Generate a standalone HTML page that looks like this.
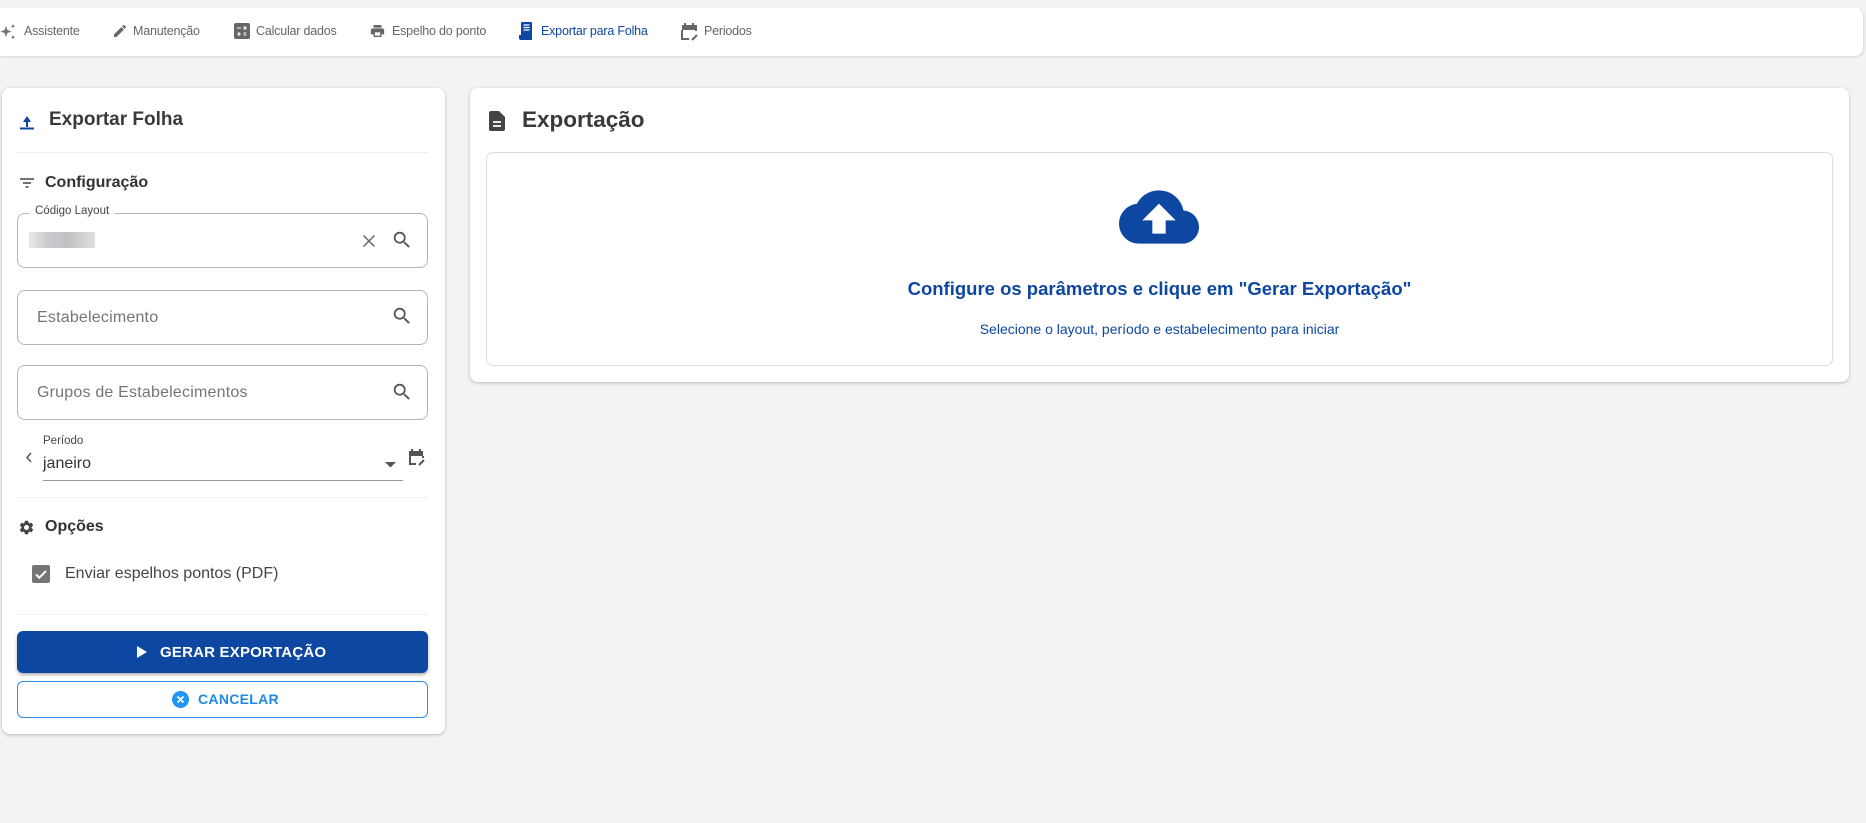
<!DOCTYPE html>
<html><head><meta charset="utf-8"><style>
*{box-sizing:border-box;margin:0;padding:0}
body{width:1866px;height:823px;background:#f3f3f3;font-family:"Liberation Sans",sans-serif;position:relative;overflow:hidden;color:#333}
.a{position:absolute}
.bar{left:0;top:8px;width:1863px;height:48px;background:#fff;border-radius:0 8px 8px 0;box-shadow:1px 1px 2px rgba(0,0,0,.12)}
.ti{position:absolute;top:24px;font-size:12.5px;color:#666;letter-spacing:-.2px;white-space:nowrap}
.card{background:#fff;border-radius:8px;box-shadow:0 1px 3px rgba(0,0,0,.25)}
.field{left:17px;width:411px;height:55px;border:1px solid #b5b5b5;border-radius:8px;background:#fff}
.ph{position:absolute;left:19px;top:18px;font-size:16px;color:#757575;letter-spacing:.2px}
.hr{height:1px;background:#eee;left:17px;width:411px}
svg{position:absolute}
</style></head><body>
<div class="a bar"></div>
<svg style="left:0;top:23px" width="16" height="18" viewBox="0 0 16 18"><path d="M6 3l1.5 4 4 1.5-4 1.5L6 14l-1.5-4L.5 8.5l4-1.5z" fill="#777"/><path d="M13 1l.7 1.5 1.5.7-1.5.7L13 5.4l-.7-1.5-1.5-.7 1.5-.7zM13 12l.7 1.5 1.5.7-1.5.7-.7 1.5-.7-1.5-1.5-.7 1.5-.7z" fill="#777"/></svg>
<div class="ti" style="left:24px">Assistente</div>
<svg style="left:112px;top:23px" width="16" height="16" viewBox="0 0 24 24"><path d="M3 17.25V21h3.75L17.8 9.94l-3.75-3.75L3 17.25zM20.7 7.04a1 1 0 000-1.41l-2.34-2.34a1 1 0 00-1.41 0l-1.83 1.83 3.75 3.75 1.83-1.83z" fill="#666"/></svg>
<div class="ti" style="left:133px">Manutenção</div>
<svg style="left:234px;top:23px" width="16" height="16" viewBox="0 0 16 16"><rect width="16" height="16" rx="2" fill="#666"/><path d="M3 5h4M9.5 3.5l3 3M12.5 3.5l-3 3M3 11h4M5 9v4M9.5 10h3M9.5 12h3" stroke="#fff" stroke-width="1.1"/></svg>
<div class="ti" style="left:256px">Calcular dados</div>
<svg style="left:369px;top:23px" width="17" height="16" viewBox="0 0 24 24"><path d="M19 8H5c-1.66 0-3 1.34-3 3v6h4v4h12v-4h4v-6c0-1.66-1.34-3-3-3zm-3 11H8v-5h8v5zm2-16H6v4h12V3z" fill="#666"/></svg>
<div class="ti" style="left:392px">Espelho do ponto</div>
<svg style="left:519px;top:22px" width="14" height="19" viewBox="0 0 14 19"><rect x="2" y="0" width="11" height="15" rx="1" fill="#0d47a1"/><path d="M4.5 3h6M4.5 5.5h6M4.5 8h6" stroke="#fff" stroke-width="1.2"/><path d="M0 13v3a2 2 0 002 2h11v-3H3v-2z" fill="#0d47a1"/></svg>
<div class="ti" style="left:541px;color:#0d47a1">Exportar para Folha</div>
<svg style="left:681px;top:22px" width="17" height="19" viewBox="0 0 17 19"><path d="M1 4h14v5" fill="none" stroke="#666" stroke-width="2"/><rect x="1" y="3" width="14" height="5" fill="#666"/><path d="M4 1v3M12 1v3" stroke="#666" stroke-width="2"/><path d="M1 8v9h7" fill="none" stroke="#666" stroke-width="2"/><path d="M11 18l5-5" stroke="#666" stroke-width="2"/></svg>
<div class="ti" style="left:704px">Periodos</div>

<div class="a card" style="left:2px;top:88px;width:443px;height:646px"></div>
<svg style="left:19px;top:112px" width="16" height="18" viewBox="0 0 16 18"><path d="M4 10h3v5h2v-5h3L8 4z" fill="#0d47a1"/><rect x="1" y="15.5" width="14" height="2" fill="#0d47a1"/></svg>
<div class="a" style="left:49px;top:109px;font-size:19px;font-weight:bold;color:#3a3a3a">Exportar Folha</div>
<div class="a hr" style="top:152px"></div>
<svg style="left:19px;top:176px" width="16" height="14" viewBox="0 0 16 14"><path d="M1 3h14M4 7h8M6.5 11h3" stroke="#444" stroke-width="1.6"/></svg>
<div class="a" style="left:45px;top:174px;font-size:16px;font-weight:bold;color:#333">Configuração</div>

<div class="a field" style="top:213px"></div>
<div class="a" style="left:29px;top:205px;background:#fff;padding:0 6px;font-size:11.5px;color:#444">Código Layout</div>
<div class="a" style="left:29px;top:232px;width:66px;height:16px;background:linear-gradient(90deg,#e6e6e6,#c4c4c8 30%,#bcb8bc 60%,#dcdcdc);opacity:.9"></div>
<svg style="left:362px;top:234px" width="14" height="14" viewBox="0 0 14 14"><path d="M1.5 1.5l11 11M12.5 1.5l-11 11" stroke="#666" stroke-width="1.5"/></svg>
<svg style="left:391px;top:229px" width="22" height="22" viewBox="0 0 24 24"><path d="M15.5 14h-.79l-.28-.27A6.47 6.47 0 0016 9.5 6.5 6.5 0 109.5 16c1.61 0 3.09-.59 4.23-1.57l.27.28v.79l5 4.99L20.49 19l-4.99-5zm-6 0C7.01 14 5 11.990 5 9.5S7.01 5 9.5 5 14 7.01 14 9.5 11.99 14 9.5 14z" fill="#555"/></svg>

<div class="a field" style="top:290px"><div class="ph">Estabelecimento</div></div>
<svg style="left:391px;top:305px" width="22" height="22" viewBox="0 0 24 24"><path d="M15.5 14h-.79l-.28-.27A6.47 6.47 0 0016 9.5 6.5 6.5 0 109.5 16c1.61 0 3.09-.59 4.23-1.57l.27.28v.79l5 4.99L20.49 19l-4.99-5zm-6 0C7.01 14 5 11.99 5 9.5S7.01 5 9.5 5 14 7.01 14 9.5 11.99 14 9.5 14z" fill="#555"/></svg>
<div class="a field" style="top:365px"><div class="ph">Grupos de Estabelecimentos</div></div>
<svg style="left:391px;top:381px" width="22" height="22" viewBox="0 0 24 24"><path d="M15.5 14h-.79l-.28-.27A6.47 6.47 0 0016 9.5 6.5 6.5 0 109.5 16c1.61 0 3.09-.59 4.23-1.57l.27.28v.79l5 4.99L20.49 19l-4.99-5zm-6 0C7.01 14 5 11.99 5 9.5S7.01 5 9.5 5 14 7.01 14 9.5 11.99 14 9.5 14z" fill="#555"/></svg>

<div class="a" style="left:43px;top:435px;font-size:11.5px;color:#444">Período</div>
<svg style="left:25px;top:452px" width="8" height="11" viewBox="0 0 8 11"><path d="M6 1L2 5.5 6 10" fill="none" stroke="#555" stroke-width="1.5"/></svg>
<div class="a" style="left:43px;top:455px;font-size:16px;color:#333">janeiro</div>
<div class="a" style="left:43px;top:480px;width:360px;height:1px;background:#999"></div>
<svg style="left:385px;top:462px" width="11" height="6" viewBox="0 0 11 6"><path d="M0 0h11L5.5 5.5z" fill="#555"/></svg>
<svg style="left:408px;top:448px" width="17" height="18" viewBox="0 0 17 18"><rect x="1" y="3" width="14" height="5" fill="#555"/><path d="M4 1v3M12 1v3" stroke="#555" stroke-width="2"/><path d="M2 8v8h6M15 8v2" fill="none" stroke="#555" stroke-width="2"/><path d="M11 17l5-5" stroke="#555" stroke-width="2"/></svg>
<div class="a hr" style="top:497px"></div>
<svg style="left:18px;top:519px" width="17" height="17" viewBox="0 0 24 24"><path d="M19.14 12.94c.04-.3.06-.61.06-.94 0-.32-.02-.64-.07-.94l2.030-1.58a.49.49 0 00.12-.61l-1.92-3.32a.49.49 0 00-.59-.22l-2.39.96c-.5-.38-1.03-.7-1.62-.94l-.36-2.54a.48.48 0 00-.48-.41h-3.84c-.24 0-.43.17-.47.41l-.36 2.54c-.59.24-1.13.57-1.62.94l-2.39-.96a.48.48 0 00-.59.22L2.74 8.87c-.12.21-.08.47.12.61l2.03 1.58c-.05.3-.09.63-.09.94s.02.64.07.94l-2.03 1.58a.49.49 0 00-.12.61l1.92 3.32c.12.22.37.29.59.22l2.39-.96c.5.38 1.03.7 1.62.94l.36 2.54c.05.24.24.41.48.41h3.84c.24 0 .44-.17.47-.41l.36-2.54c.59-.24 1.13-.56 1.62-.94l2.39.96c.22.08.47 0 .59-.22l1.92-3.32c.12-.22.07-.47-.12-.61l-2.01-1.58zM12 15.6A3.6 3.6 0 1112 8.4a3.6 3.6 0 010 7.2z" fill="#444"/></svg>
<div class="a" style="left:45px;top:518px;font-size:16px;font-weight:bold;color:#333">Opções</div>
<svg style="left:32px;top:565px" width="18" height="18" viewBox="0 0 18 18"><rect width="18" height="18" rx="2" fill="#757575"/><path d="M4 9.5l3.3 3.2L14 6" fill="none" stroke="#fff" stroke-width="2"/></svg>
<div class="a" style="left:65px;top:565px;font-size:16px;color:#444">Enviar espelhos pontos (PDF)</div>
<div class="a hr" style="top:614px"></div>
<div class="a" style="left:17px;top:631px;width:411px;height:42px;background:#0d47a1;border-radius:6px;box-shadow:0 2px 3px rgba(0,0,0,.3)"></div>
<svg style="left:137px;top:646px" width="10" height="12" viewBox="0 0 10 12"><path d="M0 0l10 6-10 6z" fill="#fff"/></svg>
<div class="a" style="left:160px;top:644px;font-size:15px;font-weight:bold;color:#fff;letter-spacing:.2px">GERAR EXPORTAÇÃO</div>
<div class="a" style="left:17px;top:681px;width:411px;height:37px;border:1px solid #2f8fe8;border-radius:6px"></div>
<svg style="left:172px;top:691px" width="17" height="17" viewBox="0 0 17 17"><circle cx="8.5" cy="8.5" r="8.5" fill="#2196f3"/><path d="M5.5 5.5l6 6M11.5 5.5l-6 6" stroke="#fff" stroke-width="1.8"/></svg>
<div class="a" style="left:198px;top:691px;font-size:14px;font-weight:bold;color:#1e88e5;letter-spacing:.3px">CANCELAR</div>

<div class="a card" style="left:470px;top:88px;width:1379px;height:294px"></div>
<svg style="left:489px;top:111px" width="16" height="20" viewBox="0 0 16 20"><path d="M2 0h8l6 6v12a2 2 0 01-2 2H2a2 2 0 01-2-2V2a2 2 0 012-2z" fill="#444"/><path d="M4 11h8M4 15h8" stroke="#fff" stroke-width="1.8"/></svg>
<div class="a" style="left:522px;top:107px;font-size:22.5px;font-weight:bold;color:#3a3a3a">Exportação</div>
<div class="a" style="left:486px;top:152px;width:1347px;height:214px;border:1px solid #ddd;border-radius:7px"></div>
<svg style="left:1119px;top:190px" width="80" height="54" viewBox="0 0 24 16"><path d="M19.35 6.04A7.490 7.490 0 0012 0C9.11 0 6.6 1.64 5.35 4.04A5.994 5.994 0 000 10c0 3.31 2.69 6 6 6h13c2.76 0 5-2.24 5-5 0-2.64-2.05-4.78-4.65-4.96z" fill="#0d47a1"/><path d="M14 9v4h-4V9H7l5-5 5 5z" fill="#fff"/></svg>
<div class="a" style="left:486px;width:1347px;top:278px;text-align:center;font-size:18.5px;font-weight:bold;color:#0d47a1">Configure os parâmetros e clique em "Gerar Exportação"</div>
<div class="a" style="left:486px;width:1347px;top:321px;text-align:center;font-size:14px;color:#0d47a1">Selecione o layout, período e estabelecimento para iniciar</div>
</body></html>
